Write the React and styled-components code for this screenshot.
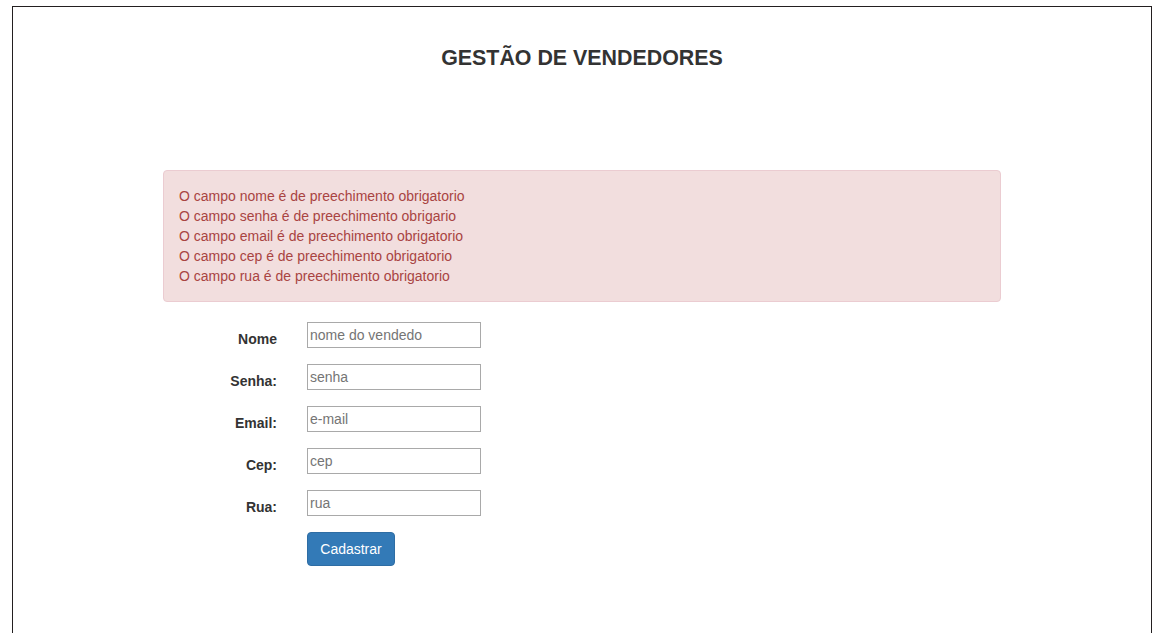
import React from 'react'
import styled, { createGlobalStyle } from 'styled-components'

const GlobalStyle = createGlobalStyle`
	html, body {
		margin: 0;
		padding: 0;
		overflow: hidden;
		background: #fff;
	}
	body {
		font-family: 'Liberation Sans', Arial, Helvetica, sans-serif;
		font-size: 14px;
		line-height: 20px;
		color: #333;
	}
`

const Frame = styled.div`
	margin: 6px 5px 0 12px;
	height: 627px;
	border: 1px solid #231f20;
	border-bottom: none;
	box-sizing: border-box;
	padding-top: 40px;
`

const Title = styled.h1`
	margin: 0;
	font-size: 21.4px;
	line-height: 22px;
	font-weight: bold;
	text-align: center;
	color: #333;
`

const Content = styled.div`
	width: 838px;
	margin: 101px auto 0;
`

const Alert = styled.div`
	background: #f2dede;
	border: 1px solid #ebccd1;
	border-radius: 4px;
	color: #a94442;
	padding: 15px;
	margin-bottom: 20px;
`

const Form = styled.form`
	display: flex;
	flex-direction: column;
	gap: 15px;
`

const Row = styled.div`
	display: flex;
	align-items: flex-start;
`

const Label = styled.label`
	width: 114px;
	margin-right: 30px;
	padding-top: 7px;
	text-align: right;
	font-weight: bold;
	line-height: 20px;
`

const Input = styled.input`
	width: 174px;
	height: 26px;
	box-sizing: border-box;
	border: 1px solid #a9a9a9;
	padding: 0 2px;
	margin: 0;
	font-family: 'Liberation Sans', Arial, sans-serif;
	font-size: 14px;
	color: #333;
	&::placeholder {
		color: #757575;
	}
`

const Button = styled.button`
	margin-left: 144px;
	width: 88px;
	height: 34px;
	background: #337ab7;
	border: 1px solid #2e6da4;
	border-radius: 4px;
	color: #fff;
	font-family: 'Liberation Sans', Arial, sans-serif;
	font-size: 14px;
	padding: 6px 12px;
`

const errors = [
	'O campo nome é de preechimento obrigatorio',
	'O campo senha é de preechimento obrigario',
	'O campo email é de preechimento obrigatorio',
	'O campo cep é de preechimento obrigatorio',
	'O campo rua é de preechimento obrigatorio',
]

const fields = [
	{ label: 'Nome', placeholder: 'nome do vendedo' },
	{ label: 'Senha:', placeholder: 'senha' },
	{ label: 'Email:', placeholder: 'e-mail' },
	{ label: 'Cep:', placeholder: 'cep' },
	{ label: 'Rua:', placeholder: 'rua' },
]

const App = () => {
	return (
		<>
			<GlobalStyle />
			<Frame>
				<Title>GESTÃO DE VENDEDORES</Title>
				<Content>
					<Alert>
						{errors.map((e) => (
							<div key={e}>{e}</div>
						))}
					</Alert>
					<Form onSubmit={(e) => e.preventDefault()}>
						{fields.map((f) => (
							<Row key={f.label}>
								<Label>{f.label}</Label>
								<Input placeholder={f.placeholder} />
							</Row>
						))}
						<Row>
							<Button type='submit'>Cadastrar</Button>
						</Row>
					</Form>
				</Content>
			</Frame>
		</>
	)
}

export default App
